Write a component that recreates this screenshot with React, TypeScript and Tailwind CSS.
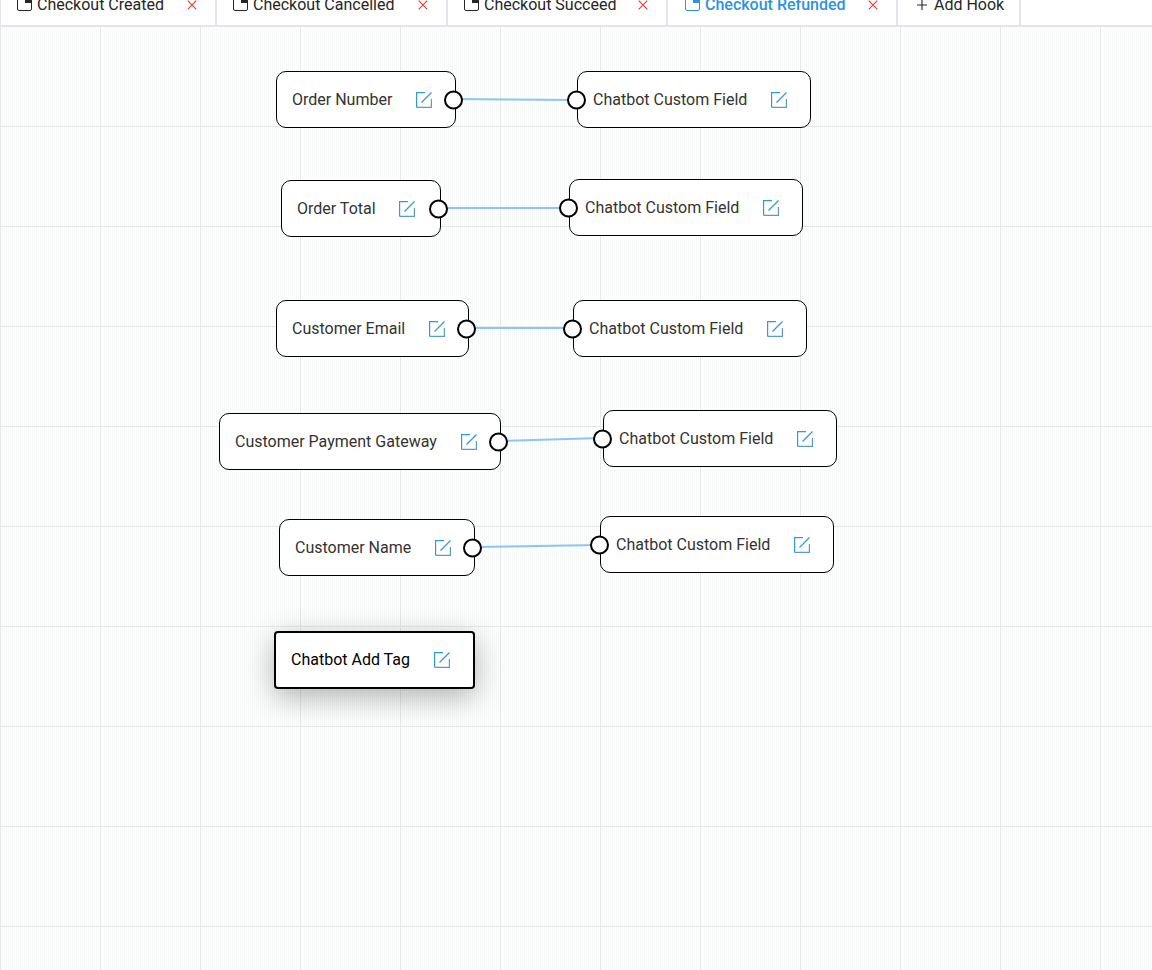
const tabs = [
  { label: 'Checkout Created', box: 'w-[216px] pl-[16px]' },
  { label: 'Checkout Cancelled', box: 'w-[231px] pl-[16px]' },
  { label: 'Checkout Succeed', box: 'w-[220px] pl-[16px]' },
  { label: 'Checkout Refunded', box: 'w-[230px] pl-[17px]', active: true },
]

const nodes = [
  { label: 'Order Number', x: 276, y: 71, w: 180, out: true },
  { label: 'Chatbot Custom Field', x: 577, y: 71, w: 234, in: true },
  { label: 'Order Total', x: 281, y: 180, w: 160, out: true, tight: true },
  { label: 'Chatbot Custom Field', x: 569, y: 179, w: 234, in: true },
  { label: 'Customer Email', x: 276, y: 300, w: 193, out: true },
  { label: 'Chatbot Custom Field', x: 573, y: 300, w: 234, in: true },
  { label: 'Customer Payment Gateway', x: 219, y: 413, w: 282, out: true },
  { label: 'Chatbot Custom Field', x: 603, y: 410, w: 234, in: true },
  { label: 'Customer Name', x: 279, y: 519, w: 196, out: true },
  { label: 'Chatbot Custom Field', x: 600, y: 516, w: 234, in: true },
]

const links = [
  [453, 99, 575, 100],
  [437, 208, 568, 208],
  [465, 328, 572, 328],
  [498, 441, 602, 438],
  [472, 547, 599, 545],
]

function TabIcon({ active }: { active?: boolean }) {
  const color = active ? '#2a94e0' : '#262626'
  return (
    <svg width="15" height="16" viewBox="0 0 15 16" fill="none" className="mt-[-5px] shrink-0">
      <rect x="0.5" y="0.5" width="14" height="15" rx="1.5" stroke={color} />
      <rect x="8" y="0" width="7" height="8" fill={color} />
    </svg>
  )
}

function CloseIcon() {
  return (
    <svg width="10" height="10" viewBox="0 0 10 10" fill="none" stroke="#e53935" strokeWidth="1.1" className="shrink-0">
      <path d="M0.7 0.7L9.3 9.3M9.3 0.7L0.7 9.3" />
    </svg>
  )
}

function EditIcon() {
  return (
    <svg width="18" height="18" viewBox="0 0 18 18" fill="none" strokeWidth="1.2" className="shrink-0">
      <path d="M10 1.6H1.6V16.4" stroke="#3498db" />
      <path d="M1.6 16.4H16.4V8" stroke="#5a9cc4" />
      <path d="M6.5 11.5L16.5 1.5" stroke="#3498db" />
    </svg>
  )
}

function Handle({ side }: { side: 'left' | 'right' }) {
  return (
    <span
      className={`absolute top-1/2 h-[19px] w-[19px] -translate-y-1/2 rounded-full border-2 border-black bg-white ${
        side === 'left' ? 'left-[-11.5px]' : 'right-[-8px]'
      }`}
    />
  )
}

export default function App() {
  return (
    <div className="relative h-[970px] w-[1152px] overflow-hidden bg-white font-['Roboto',sans-serif] text-base">
      <div className="flex h-[27px] items-start border-b-2 border-l border-[#e4e5ea] bg-white">
        {tabs.map((tab) => (
          <div
            key={tab.label}
            className={`flex h-[25px] items-center border-r-2 border-[#e4e5ea] pb-[15px] ${tab.box}`}
          >
            <TabIcon active={tab.active} />
            <span className={`ml-[5px] whitespace-nowrap ${tab.active ? 'font-medium text-[#2a94e0]' : 'text-[#262626]'}`}>
              {tab.label}
            </span>
            <span className="ml-auto mr-[18px] flex">
              <CloseIcon />
            </span>
          </div>
        ))}
        <div className="flex h-[25px] w-[123px] items-center gap-[7px] border-r-2 border-[#e4e5ea] pb-[15px] pl-[19px] text-[#262626]">
          <svg width="10" height="10" viewBox="0 0 10 10" fill="none" stroke="#262626" strokeWidth="1.1" className="shrink-0">
            <path d="M5 0V10M0 5H10" />
          </svg>
          <span className="whitespace-nowrap">Add Hook</span>
        </div>
      </div>

      <div className="relative h-[943px] bg-[#fefefe] bg-[linear-gradient(to_right,#e6e8e8_1px,transparent_1px),linear-gradient(to_bottom,#e6e8e8_1px,transparent_1px),linear-gradient(to_right,#f7faf8_1px,transparent_1px)] bg-[size:100px_100px,100px_100px,2px_2px] bg-[position:0_-1px,0_-1px,0_0]">
        <svg className="absolute left-0 top-[-27px]" width="1152" height="970" fill="none">
          {links.map(([x1, y1, x2, y2]) => (
            <line key={x1} x1={x1} y1={y1} x2={x2} y2={y2} stroke="#90c4f2" strokeWidth="2" />
          ))}
        </svg>

        {nodes.map((node) => (
          <div
            key={node.label + node.x}
            className={`absolute flex h-[57px] items-center justify-between rounded-[10px] border border-black bg-white pl-[15px] text-[#333] ${
              node.tight ? 'pr-[24px]' : 'pr-[22px]'
            }`}
            style={{ left: node.x, top: node.y - 27, width: node.w }}
          >
            <span className="whitespace-nowrap">{node.label}</span>
            <EditIcon />
            {node.in && <Handle side="left" />}
            {node.out && <Handle side="right" />}
          </div>
        ))}

        <div className="absolute left-[274px] top-[604px] flex h-[58px] w-[201px] items-center justify-between rounded-[4px] border-2 border-black bg-white pl-[15px] pr-[22px] text-black shadow-[0_8px_30px_rgba(0,0,0,0.3)]">
          <span className="whitespace-nowrap">Chatbot Add Tag</span>
          <EditIcon />
        </div>
      </div>
    </div>
  )
}
